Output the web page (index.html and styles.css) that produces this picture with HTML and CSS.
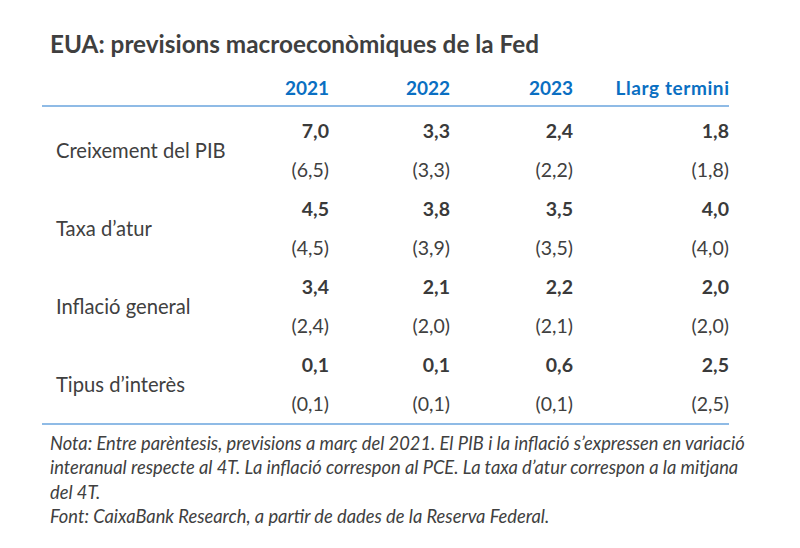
FILE: index.html
```html
<!DOCTYPE html>
<html lang="ca">
<head>
<meta charset="utf-8">
<title>EUA: previsions macroeconòmiques de la Fed</title>
<link rel="stylesheet" href="styles.css">
</head>
<body>
<div class="page">
  <h1 class="title">EUA: previsions macroeconòmiques de la Fed</h1>
  <div class="table">
    <div class="head">
      <span></span>
      <span class="year">2021</span>
      <span class="year">2022</span>
      <span class="year">2023</span>
      <span class="year year-long">Llarg termini</span>
    </div>
    <div class="body">
      <div class="group">
        <span class="label">Creixement del PIB</span>
        <span class="val">7,0</span><span class="val">3,3</span><span class="val">2,4</span><span class="val">1,8</span>
        <span class="prev">(6,5)</span><span class="prev">(3,3)</span><span class="prev">(2,2)</span><span class="prev">(1,8)</span>
      </div>
      <div class="group">
        <span class="label">Taxa d’atur</span>
        <span class="val">4,5</span><span class="val">3,8</span><span class="val">3,5</span><span class="val">4,0</span>
        <span class="prev">(4,5)</span><span class="prev">(3,9)</span><span class="prev">(3,5)</span><span class="prev">(4,0)</span>
      </div>
      <div class="group">
        <span class="label">Inflació general</span>
        <span class="val">3,4</span><span class="val">2,1</span><span class="val">2,2</span><span class="val">2,0</span>
        <span class="prev">(2,4)</span><span class="prev">(2,0)</span><span class="prev">(2,1)</span><span class="prev">(2,0)</span>
      </div>
      <div class="group">
        <span class="label">Tipus d’interès</span>
        <span class="val">0,1</span><span class="val">0,1</span><span class="val">0,6</span><span class="val">2,5</span>
        <span class="prev">(0,1)</span><span class="prev">(0,1)</span><span class="prev">(0,1)</span><span class="prev">(2,5)</span>
      </div>
    </div>
  </div>
  <p class="note">Nota: Entre parèntesis, previsions a març del 2021. El PIB i la inflació s’expressen en variació<br>interanual respecte al 4T. La inflació correspon al PCE. La taxa d’atur correspon a la mitjana<br>del 4T.<br>Font: CaixaBank Research, a partir de dades de la Reserva Federal.</p>
</div>
</body>
</html>
```

FILE: styles.css
```css
* { box-sizing: border-box; }
html, body { margin: 0; padding: 0; background: #ffffff; }
body {
  width: 800px;
  height: 548px;
  font-family: Lato, "Open Sans", sans-serif;
  color: #404040;
}
.page {
  padding: 29px 0 0 42px;
  width: 738px;
}
.title {
  margin: 0 0 0 8px;
  font-size: 24.3px;
  font-weight: 700;
  line-height: 30px;
  color: #3f3f3f;
}
.table {
  margin-top: 13px;
  padding-right: 9px;
}
.head,
.group {
  display: grid;
  grid-template-columns: 208px 79px 121px 123px 156px;
}
.head {
  height: 35px;
  padding-bottom: 3px;
  align-items: center;
  border-bottom: 2px solid #8fbbe6;
}
.year {
  text-align: right;
  font-size: 19px;
  font-weight: 700;
  color: #0a6fc2;
}
.year-long {
  letter-spacing: 0.6px;
  margin-right: -0.6px;
}
.body {
  padding-top: 4px;
  border-bottom: 2px solid #8fbbe6;
}
.group {
  grid-template-rows: 39px 39px;
  align-items: center;
}
.label {
  grid-row: 1 / span 2;
  padding-left: 14px;
  font-size: 20.2px;
  color: #404040;
}
.val,
.prev {
  text-align: right;
  font-size: 19.5px;
}
.val { font-weight: 700; color: #3a3a3a; }
.prev { color: #404040; }
.note {
  margin: 6px 0 0 8px;
  font-size: 18.3px;
  font-style: italic;
  line-height: 24.3px;
  color: #404040;
  white-space: nowrap;
}
```
